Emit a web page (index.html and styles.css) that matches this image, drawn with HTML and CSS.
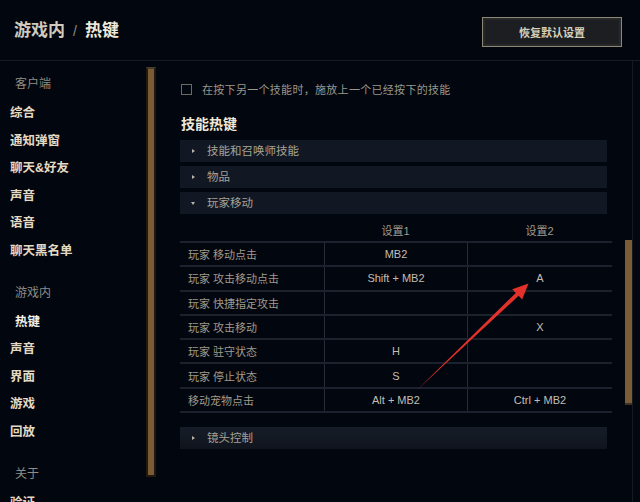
FILE: index.html
```html
<!DOCTYPE html>
<html lang="zh-CN">
<head>
<meta charset="UTF-8" />
<meta name="viewport" content="width=device-width, initial-scale=1" />
<title>游戏内 / 热键</title>
<link rel="stylesheet" href="styles.css">
</head>
<body>

<div class="app">
  <header class="topbar">
    <h1 class="crumb"><span class="crumb-parent">游戏内</span><span class="crumb-sep">/</span><span class="crumb-current">热键</span></h1>
    <button class="reset-btn">恢复默认设置</button>
  </header>

  <div class="page">
    <aside class="sidebar">
      <nav class="nav">
        <div class="nav-group first">
          <div class="nav-label">客户端</div>
          <a class="nav-item">综合</a>
          <a class="nav-item">通知弹窗</a>
          <a class="nav-item">聊天&amp;好友</a>
          <a class="nav-item">声音</a>
          <a class="nav-item">语音</a>
          <a class="nav-item">聊天黑名单</a>
        </div>
        <div class="nav-group">
          <div class="nav-label">游戏内</div>
          <a class="nav-item active">热键</a>
          <a class="nav-item">声音</a>
          <a class="nav-item">界面</a>
          <a class="nav-item">游戏</a>
          <a class="nav-item">回放</a>
        </div>
        <div class="nav-group">
          <div class="nav-label">关于</div>
          <a class="nav-item">验证</a>
        </div>
      </nav>
      <div class="side-scroll"></div>
    </aside>

    <main class="content">
      <div class="panel">
        <label class="check-row">
          <span class="checkbox"></span>
          <span>在按下另一个技能时，施放上一个已经按下的技能</span>
        </label>

        <h2 class="section-title">技能热键</h2>

        <div class="group-bar"><span class="caret"></span>技能和召唤师技能</div>
        <div class="group-bar"><span class="caret"></span>物品</div>
        <div class="group-bar open"><span class="caret"></span>玩家移动</div>

        <div class="keytable">
          <div class="krow khead">
            <div class="kcell"></div>
            <div class="kcell val">设置1</div>
            <div class="kcell val">设置2</div>
          </div>
          <div class="krow">
            <div class="kcell name">玩家 移动点击</div>
            <div class="kcell val">MB2</div>
            <div class="kcell val"></div>
          </div>
          <div class="krow">
            <div class="kcell name">玩家 攻击移动点击</div>
            <div class="kcell val">Shift + MB2</div>
            <div class="kcell val">A</div>
          </div>
          <div class="krow">
            <div class="kcell name">玩家 快捷指定攻击</div>
            <div class="kcell val"></div>
            <div class="kcell val"></div>
          </div>
          <div class="krow">
            <div class="kcell name">玩家 攻击移动</div>
            <div class="kcell val"></div>
            <div class="kcell val">X</div>
          </div>
          <div class="krow">
            <div class="kcell name">玩家 驻守状态</div>
            <div class="kcell val">H</div>
            <div class="kcell val"></div>
          </div>
          <div class="krow">
            <div class="kcell name">玩家 停止状态</div>
            <div class="kcell val">S</div>
            <div class="kcell val"></div>
          </div>
          <div class="krow">
            <div class="kcell name">移动宠物点击</div>
            <div class="kcell val">Alt + MB2</div>
            <div class="kcell val">Ctrl + MB2</div>
          </div>
        </div>

        <div class="group-bar last"><span class="caret"></span>镜头控制</div>
      </div>
      <div class="main-scroll"></div>
    </main>

    <div class="edge"></div>
  </div>
</div>

<!-- annotation arrow drawn over the screenshot -->
<svg class="arrow" width="640" height="502" viewBox="0 0 640 502">
  <polygon points="416,391 515.8,292.9 512.2,289.2 528.5,283.5 522.2,299.5 518.6,295.8" fill="#e2302a" />
</svg>

</body>
</html>
```

FILE: styles.css
```css
body {
  margin: 0;
  width: 640px;
  height: 502px;
  overflow: hidden;
  position: relative;
  background-color: #02060f;
  color: #a09b8c;
  font-family: "Liberation Sans", "Noto Sans CJK SC", sans-serif;
}
.app {
  display: flex;
  flex-direction: column;
  height: 502px;
}
.topbar {
  height: 60px;
  flex: none;
  border-bottom: 1px solid #161b25;
  display: flex;
  align-items: center;
  justify-content: space-between;
  padding: 0 18px 0 14px;
}
.crumb {
  margin: 2px 0 0;
  font-size: 17px;
  font-weight: bold;
  line-height: 20px;
}
.crumb-parent {
  color: #cfcabd;
}
.crumb-sep {
  color: #8c8a84;
  font-weight: normal;
  font-size: 14px;
  margin: 0 8px;
}
.crumb-current {
  color: #f0e9da;
}
.reset-btn {
  width: 140px;
  height: 30px;
  margin-top: 4px;
  background-color: #1c1e22;
  border: 1px solid #8e8776;
  box-shadow: inset 0 0 0 2px #27282a;
  color: #d8d0b8;
  font-family: inherit;
  font-size: 11px;
  font-weight: bold;
  cursor: pointer;
}
.page {
  flex: 1;
  display: flex;
  min-height: 0;
}

/* sidebar */
.sidebar {
  width: 160px;
  flex: none;
  display: flex;
}
.nav {
  width: 146px;
  padding-top: 7px;
}
.nav-group {
  margin-top: 11px;
}
.nav-group.first {
  margin-top: 0;
}
.nav-label {
  height: 32px;
  line-height: 32px;
  padding-left: 15px;
  font-size: 12px;
  color: #8f8c85;
}
.nav-item {
  display: block;
  height: 27.6px;
  line-height: 27.6px;
  padding-left: 10px;
  font-size: 12.5px;
  font-weight: bold;
  color: #e4dac4;
}
.nav-item.active {
  padding-left: 15px;
  color: #f7f3ea;
}
.side-scroll {
  width: 6px;
  height: 406px;
  margin-top: 6px;
  border: 2px solid #23180e;
  border-top-color: #4a3c2c;
  background-color: #7a5b36;
}

/* main */
.content {
  flex: 1;
  display: flex;
  padding-left: 20px;
}
.panel {
  width: 432px;
  padding-top: 20px;
}
.check-row {
  display: flex;
  align-items: center;
  height: 16px;
  padding-left: 1px;
  font-size: 11px;
  letter-spacing: 0.3px;
  color: #9a968b;
}
.checkbox {
  width: 9px;
  height: 9px;
  border: 1px solid #6b6a66;
  margin-right: 10px;
}
.section-title {
  margin: 17px 0 0 1px;
  height: 20px;
  line-height: 20px;
  font-size: 14px;
  font-weight: bold;
  color: #f0e9da;
}
.group-bar {
  width: 427px;
  height: 22px;
  line-height: 22px;
  margin-top: 4px;
  display: flex;
  align-items: center;
  background-color: #121823;
  font-size: 11.5px;
  color: #a6a296;
}
.section-title + .group-bar {
  margin-top: 6px;
}
.group-bar.last {
  margin-top: 14px;
  background: linear-gradient(#171d28, #0f141d);
}
.caret {
  width: 0;
  height: 0;
  margin: 0 12px 0 12px;
  border-top: 2px solid transparent;
  border-bottom: 2px solid transparent;
  border-left: 3px solid #b9b4a8;
}
.group-bar.open .caret {
  border-left: 2px solid transparent;
  border-right: 2px solid transparent;
  border-top: 3px solid #b9b4a8;
  border-bottom: 0;
  margin-left: 11px;
}

/* key bindings table */
.keytable {
  margin-top: 4px;
}
.krow {
  display: grid;
  grid-template-columns: 144px 143px 145px;
  height: 22.3px;
  border-bottom: 2px solid #1b212d;
}
.krow.khead {
  height: 23px;
}
.kcell {
  display: flex;
  align-items: center;
  font-size: 11px;
  border-left: 1px solid #262c38;
}
.kcell:first-child {
  border-left: none;
}
.khead .kcell {
  border-left: none;
}
.kcell.name {
  padding-left: 8px;
  color: #a09b8c;
}
.kcell.val {
  justify-content: center;
  color: #c3beb1;
}
.khead .kcell.val {
  color: #a09b8c;
}
.main-scroll {
  width: 7px;
  height: 163px;
  margin: 179px 0 0 13px;
  background-color: #7a5d37;
  border-bottom: 2px solid #3d3122;
}
.edge {
  width: 7px;
  flex: none;
  border-left: 1px solid #141922;
  background-color: #03070f;
}

.arrow {
  position: absolute;
  left: 0;
  top: 0;
  pointer-events: none;
}
```
